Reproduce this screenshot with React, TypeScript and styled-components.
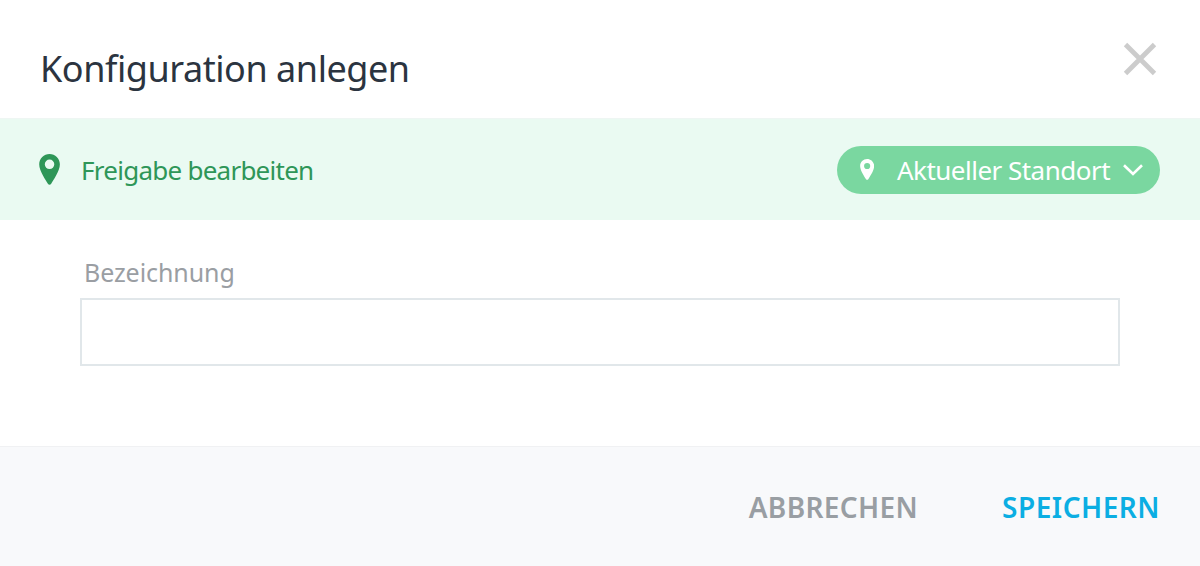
import React from "react";
import styled, { createGlobalStyle } from "styled-components";

const Global = createGlobalStyle`
  html, body { margin: 0; padding: 0; background: #fff; }
  body { font-family: "Noto Sans", "Open Sans", sans-serif; }
`;

const Dialog = styled.div`
  width: 1200px;
  height: 566px;
  display: flex;
  flex-direction: column;
  background: #fff;
  overflow: hidden;
`;

const Header = styled.header`
  height: 118px;
  flex: none;
  box-sizing: border-box;
  display: flex;
  align-items: center;
  justify-content: space-between;
  padding: 0 42px 0 40px;
`;

const Title = styled.h1`
  margin: 20px 0 0;
  font-size: 36px;
  line-height: 46px;
  font-weight: 400;
  letter-spacing: -0.45px;
  color: #2b3440;
`;

const CloseButton = styled.button`
  width: 36px;
  height: 36px;
  padding: 0;
  border: 0;
  background: none;
  display: flex;
`;

const Band = styled.section`
  height: 102px;
  flex: none;
  box-sizing: border-box;
  display: flex;
  align-items: center;
  justify-content: space-between;
  padding: 0 40px 0 39px;
  background: #eafaf2;
  border-top: 1px solid #eef6f3;
`;

const BandLabel = styled.div`
  display: flex;
  align-items: center;
  gap: 21px;
  font-size: 26px;
  letter-spacing: -0.75px;
  color: #2e9658;
`;

const Pill = styled.button`
  height: 48px;
  box-sizing: border-box;
  display: flex;
  align-items: center;
  padding: 0 17px 0 23px;
  border: 0;
  border-radius: 24px;
  background: #7ad7a0;
  color: #fff;
  font-family: inherit;
  font-size: 26px;
  letter-spacing: -0.52px;
`;

const PillText = styled.span`
  margin: 0 13px 0 23px;
`;

const Body = styled.main`
  flex: 1;
  box-sizing: border-box;
  padding: 31px 80px 0;
`;

const FieldLabel = styled.label`
  display: block;
  margin-left: 4px;
  font-size: 25px;
  line-height: 42px;
  letter-spacing: -0.08px;
  color: #9a9ea3;
`;

const Input = styled.input`
  display: block;
  width: 100%;
  height: 68px;
  margin-top: 5px;
  box-sizing: border-box;
  border: 2px solid #e1e7ea;
  background: #fff;
  outline: none;
`;

const Footer = styled.footer`
  height: 120px;
  flex: none;
  box-sizing: border-box;
  display: flex;
  align-items: center;
  justify-content: flex-end;
  gap: 84px;
  padding: 0 40px 0 0;
  background: #f8f9fb;
  border-top: 1px solid #f0f1f3;
`;

const Action = styled.button<{ $primary?: boolean }>`
  padding: 0;
  border: 0;
  background: none;
  font-family: inherit;
  font-size: 28px;
  font-weight: 600;
  letter-spacing: ${(p) => (p.$primary ? "0.5px" : "0.35px")};
  color: ${(p) => (p.$primary ? "#0baee3" : "#999ea3")};
`;

const Pin = ({ size, color, hole }: { size: number; color: string; hole: number }) => (
  <svg width={size * 0.68} height={size} viewBox="0 0 20 30" aria-hidden="true">
    <path
      fillRule="evenodd"
      fill={color}
      d={`M10 0C4.5 0 0 4.4 0 10c0 6.6 6.6 15.8 8.4 18.9.7 1.2 2.5 1.2 3.2 0C13.4 25.8 20 16.6 20 10 20 4.4 15.5 0 10 0Zm0 ${10 - hole}a${hole} ${hole} 0 1 1 0 ${hole * 2}a${hole} ${hole} 0 1 1 0-${hole * 2}Z`}
    />
  </svg>
);

export default function App() {
  return (
    <>
      <Global />
      <Dialog>
        <Header>
          <Title>Konfiguration anlegen</Title>
          <CloseButton aria-label="Schließen">
            <svg width="36" height="36" viewBox="0 0 36 36" fill="none" stroke="#cccccc" strokeWidth="4.8">
              <path d="M3.5 3.5 32.5 32.5M32.5 3.5 3.5 32.5" />
            </svg>
          </CloseButton>
        </Header>
        <Band>
          <BandLabel>
            <Pin size={31} color="#2e9658" hole={4.6} />
            Freigabe bearbeiten
          </BandLabel>
          <Pill>
            <Pin size={21} color="#fff" hole={4.4} />
            <PillText>Aktueller Standort</PillText>
            <svg width="20" height="12" viewBox="0 0 20 12" fill="none" stroke="#fff" strokeWidth="2.6">
              <path d="M1 1.2 10 10 19 1.2" />
            </svg>
          </Pill>
        </Band>
        <Body>
          <FieldLabel htmlFor="bezeichnung">Bezeichnung</FieldLabel>
          <Input id="bezeichnung" />
        </Body>
        <Footer>
          <Action>ABBRECHEN</Action>
          <Action $primary>SPEICHERN</Action>
        </Footer>
      </Dialog>
    </>
  );
}
